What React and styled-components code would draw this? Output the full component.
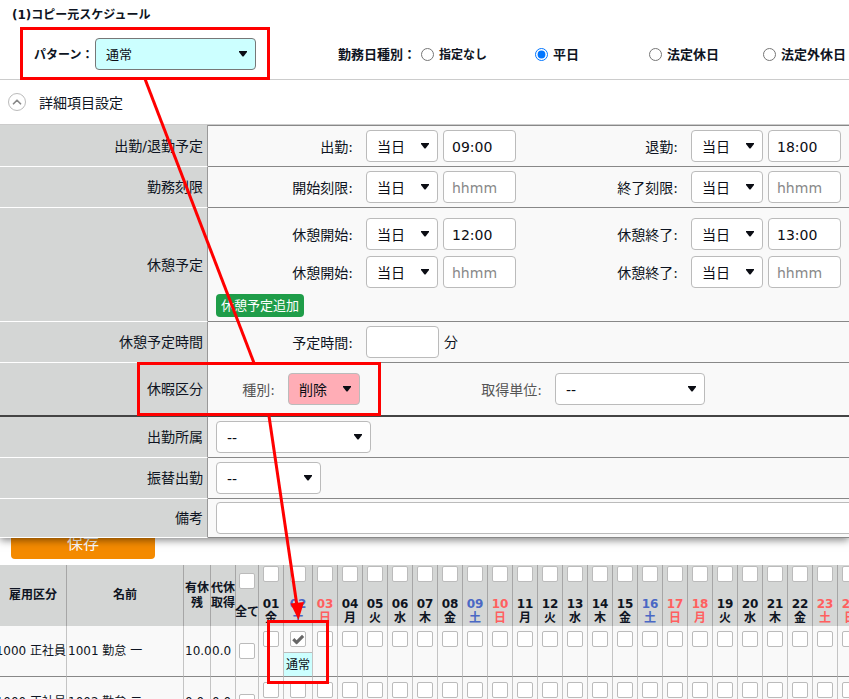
import React, { useState } from "react";
import styled, { createGlobalStyle } from "styled-components";
import { ChevronUp } from "lucide-react";

const GlobalStyle = createGlobalStyle`
  *, *::before, *::after { box-sizing: border-box; }
  body {
    margin: 0;
    background: #fff;
    color: #0e1422;
    font-family: "DejaVu Sans", "Noto Sans CJK JP", sans-serif;
    font-size: 14px;
    line-height: 20px;
  }
  button, input, select { font: inherit; color: inherit; margin: 0; }
`;

const Page = styled.div`
  position: relative;
  height: 100vh;
  overflow: hidden;
`;

const Panel = styled.section`
  position: relative;
  z-index: 1;
  background: #fff;
  box-shadow: 0 2px 8px rgba(0, 0, 0, 0.5);
`;

const Title = styled.h1`
  margin: 0;
  padding-left: 12px;
  font-size: 12px;
  line-height: 30px;
`;

const Conditions = styled.div`
  display: flex;
  align-items: flex-start;
  height: 50px;
  padding: 8px 0 0 34px;
  border-bottom: 1px solid #ccc;
  font-weight: bold;
  white-space: nowrap;
`;

const PatternLabel = styled.label`
  flex: 0 0 61px;
  font-size: 12px;
  line-height: 34px;
`;

const DayKinds = styled.div`
  display: flex;
  margin-left: 82px;
  font-size: 13px;
  line-height: 34px;
`;

const KindsTitle = styled.span`
  flex: 0 0 83px;
`;

const KindOption = styled.label`
  display: flex;
  align-items: center;
  gap: 5px;
  flex: 0 0 114px;
  font-size: ${(p) => (p.$kana ? 12 : 13)}px;
`;

const Radio = styled.input`
  width: 13px;
  height: 13px;
  accent-color: #0075ff;
  && { margin-bottom: 2px; }
`;

const DetailBar = styled.div`
  display: flex;
  align-items: center;
  gap: 13px;
  height: 45px;
  padding-left: 8px;
  border-bottom: 1px solid #ccc;
`;

const DetailTitle = styled.span`
  padding-top: 2px;
`;

const RoundButton = styled.button`
  display: flex;
  align-items: center;
  justify-content: center;
  width: 18px;
  height: 18px;
  padding: 0;
  border: 1px solid #bbb;
  border-radius: 50%;
  background: #fff;
  color: #888;
`;

const Row = styled.div`
  display: flex;
  height: ${(p) => p.$height || 41}px;
`;

const Head = styled.div`
  flex: 0 0 208px;
  display: flex;
  align-items: center;
  justify-content: flex-end;
  padding-right: 4px;
  background: #d4d6d5;
  border-right: 1px solid #999;
  border-bottom: ${(p) => (p.$strong ? "2px solid #444" : "1px solid #fff")};
`;

const Body = styled.div`
  flex: 1;
  min-width: 0;
  display: flex;
  flex-direction: column;
  justify-content: center;
  gap: 6px;
  background: #f9f9f9;
  border-top: ${(p) => (p.$first ? "1px solid #888" : "0")};
  border-bottom: ${(p) => (p.$strong ? "2px solid #444" : "1px solid #888")};
  padding: ${(p) => (p.$tall ? "10px 0 4px" : "0")};
`;

const Line = styled.div`
  display: flex;
  align-items: center;
  padding-left: ${(p) => (p.$inset ? 8 : 0)}px;
`;

const Group = styled.div`
  flex: 0 0 ${(p) => p.$width || 325}px;
  display: flex;
  align-items: center;
  gap: 5px;
  color: ${(p) => (p.$muted ? "#555" : "inherit")};
`;

const GroupLabel = styled.label`
  flex: 0 0 ${(p) => p.$width || 153}px;
  padding: 1px 8px 0 0;
  text-align: right;
  white-space: nowrap;
`;

const SelectBox = styled.span`
  position: relative;
  display: block;
  flex: 0 0 ${(p) => p.$width}px;
  height: 32px;
`;

const SelectField = styled.select`
  appearance: none;
  width: 100%;
  height: 32px;
  padding: 1px 20px 0 10px;
  border: 1px solid ${(p) => (p.$dark ? "#777" : "#bbb")};
  border-radius: 4px;
  background: ${(p) => p.$fill || "#fff"};
  color: #0b0d14;
  font-size: ${(p) => (p.$dark ? 13 : 14)}px;
  && { font-weight: normal; }
`;

const Caret = styled.svg`
  position: absolute;
  right: 9px;
  top: 13px;
  width: 8px;
  height: 6px;
  pointer-events: none;
`;

const TextField = styled.input`
  flex: 0 0 ${(p) => p.$width || 73}px;
  width: ${(p) => p.$width || 73}px;
  height: 32px;
  padding: 1px 8px 0;
  border: 1px solid #bbb;
  border-radius: 4px;
  background: #fff;
  color: #0b0d14;
  &::placeholder { color: #888; }
`;

const AddButton = styled.button`
  height: 23px;
  padding: 0 5px;
  border: 0;
  border-radius: 4px;
  background: #1f9d49;
  color: #fff;
  font-size: 13px;
  line-height: 23px;
  white-space: nowrap;
`;

const SaveButton = styled.button`
  display: block;
  width: 144px;
  height: 30px;
  margin: -9px 0 6px 11px;
  padding: 0;
  border: 0;
  border-radius: 4px;
  background: #f48a00;
  color: #fff;
  font-size: 16px;
  line-height: 30px;
`;

const Schedule = styled.table`
  table-layout: fixed;
  width: 863px;
  border-collapse: separate;
  border-spacing: 0;
  font-size: 12px;
  line-height: 15px;
`;

const HeadCell = styled.th`
  height: 61px;
  padding: 0;
  background: #d4d6d5;
  border-right: 1px solid #a6a6a6;
  vertical-align: ${(p) => (p.$top ? "top" : "middle")};
  color: ${(p) => p.$color || "inherit"};
  white-space: ${(p) => (p.$top ? "nowrap" : "normal")};
`;

const Cell = styled.td`
  height: 51px;
  padding: 0;
  background: #f9f9f9;
  border-right: 1px solid #c4c4c4;
  border-bottom: 1px solid #888;
  vertical-align: ${(p) => (p.$top ? "top" : "middle")};
`;

const CellText = styled.div`
  display: flex;
  justify-content: ${(p) => (p.$end ? "flex-end" : "flex-start")};
  padding-left: ${(p) => (p.$end ? 0 : 1)}px;
  white-space: pre;
`;

const Stack = styled.div`
  display: flex;
  flex-direction: column;
  align-items: center;
  justify-content: space-between;
  height: ${(p) => (p.$all ? 54 : 61)}px;
  margin-top: ${(p) => (p.$all ? 7 : 0)}px;
  padding: ${(p) => (p.$all ? "1px 0 7px" : "1px 0")};
  line-height: 14px;
`;

const CheckWrap = styled.span`
  position: relative;
  display: block;
  width: 16px;
  height: 16px;
  margin: 0 auto;
`;

const CheckInput = styled.input`
  appearance: none;
  display: block;
  width: 16px;
  height: 16px;
  border: 1px solid #bbb;
  border-radius: 2px;
  background: #fff;
`;

const CheckMark = styled.svg`
  position: absolute;
  left: 1px;
  top: 1px;
  width: 14px;
  height: 14px;
  pointer-events: none;
`;

const DayBox = styled.div`
  padding: 5px 0;
`;

const DayPattern = styled.div`
  height: 24px;
  border-top: 1px solid #bbb;
  background: #cff;
  text-align: center;
  line-height: 24px;
  white-space: nowrap;
`;

const Annotation = styled.svg`
  position: absolute;
  left: 0;
  top: 0;
  z-index: 2;
  width: 849px;
  height: 699px;
  pointer-events: none;
`;

function Select({ id, width, value, label, ...look }) {
  return (
    <SelectBox $width={width}>
      <SelectField id={id} aria-label={label} defaultValue={value} {...look}>
        <option value={value}>{value}</option>
      </SelectField>
      <Caret viewBox="0 0 8 6" aria-hidden="true">
        <path d="M0 0H8V1L4.500 5.500H3.500L0 1Z" fill="#0b0d14" />
      </Caret>
    </SelectBox>
  );
}

function TimeGroup({ id, label, time }) {
  return (
    <Group>
      <GroupLabel htmlFor={id}>{label}:</GroupLabel>
      <Select width={72} value="当日" label={`${label} 日`} />
      <TextField id={id} placeholder="hhmm" defaultValue={time} />
    </Group>
  );
}

function Check({ label, initial = false }) {
  const [on, setOn] = useState(initial);
  return (
    <CheckWrap>
      <CheckInput type="checkbox" aria-label={label} checked={on} onChange={() => setOn(!on)} />
      {on && (
        <CheckMark viewBox="0 0 14 14" aria-hidden="true">
          <path d="M1.2 8.2L3.4 6L5.600 8.200L11 2.700L13.200 4.900L6 12.300H5.200Z" fill="#666" />
        </CheckMark>
      )}
    </CheckWrap>
  );
}

const WEEK = ["金", "土", "日", "月", "火", "水", "木"];
const RED_DAYS = [3, 10, 17, 18, 23, 24];
const BLUE_DAYS = [2, 9, 16];
const DAYS = Array.from({ length: 24 }, (_, i) => {
  const n = i + 1;
  const color = RED_DAYS.includes(n) ? "#ff5f5f" : BLUE_DAYS.includes(n) ? "#4a68c4" : undefined;
  return { n, text: String(n).padStart(2, "0"), week: WEEK[i % 7], color };
});

const STAFF = [
  { type: "1000 正社員", name: "1001 勤怠 一", paid: "10.0", comp: "0.0", pattern: { 2: "通常" } },
  { type: "1000 正社員", name: "1002 勤怠 二", paid: "0.0", comp: "0.0", pattern: {} },
];

const KINDS = [
  { text: "指定なし", kana: true },
  { text: "平日" },
  { text: "法定休日" },
  { text: "法定外休日" },
];

export default function App() {
  return (
    <Page>
      <GlobalStyle />
      <Panel>
        <Title>(1)コピー元スケジュール</Title>
        <Conditions>
          <PatternLabel htmlFor="pattern">パターン：</PatternLabel>
          <Select id="pattern" width={161} value="通常" $fill="#cff" $dark />
          <DayKinds role="radiogroup" aria-labelledby="kinds">
            <KindsTitle id="kinds">勤務日種別：</KindsTitle>
            {KINDS.map((k) => (
              <KindOption key={k.text} $kana={k.kana}>
                <Radio type="radio" name="kind" defaultChecked={k.text === "平日"} />
                {k.text}
              </KindOption>
            ))}
          </DayKinds>
        </Conditions>
        <DetailBar>
          <RoundButton type="button" aria-label="詳細項目設定を閉じる">
            <ChevronUp size={14} strokeWidth={3} />
          </RoundButton>
          <DetailTitle>詳細項目設定</DetailTitle>
        </DetailBar>

        <Row $height={42}>
          <Head>出勤/退勤予定</Head>
          <Body $first>
            <Line>
              <TimeGroup id="in" label="出勤" time="09:00" />
              <TimeGroup id="out" label="退勤" time="18:00" />
            </Line>
          </Body>
        </Row>
        <Row>
          <Head>勤務刻限</Head>
          <Body>
            <Line>
              <TimeGroup id="from" label="開始刻限" />
              <TimeGroup id="to" label="終了刻限" />
            </Line>
          </Body>
        </Row>
        <Row $height={114}>
          <Head>休憩予定</Head>
          <Body $tall>
            <Line>
              <TimeGroup id="rest1" label="休憩開始" time="12:00" />
              <TimeGroup id="rest1end" label="休憩終了" time="13:00" />
            </Line>
            <Line>
              <TimeGroup id="rest2" label="休憩開始" />
              <TimeGroup id="rest2end" label="休憩終了" />
            </Line>
            <Line $inset>
              <AddButton type="button">休憩予定追加</AddButton>
            </Line>
          </Body>
        </Row>
        <Row>
          <Head>休憩予定時間</Head>
          <Body>
            <Group>
              <GroupLabel htmlFor="minutes">予定時間:</GroupLabel>
              <TextField id="minutes" />
              分
            </Group>
          </Body>
        </Row>
        <Row $height={54}>
          <Head $strong>休暇区分</Head>
          <Body $strong>
            <Line>
              <Group $muted $width={192}>
                <GroupLabel htmlFor="leave" $width={75}>種別:</GroupLabel>
                <Select id="leave" width={72} value="削除" $fill="#ffadb6" />
              </Group>
              <Group $muted $width={305}>
                <GroupLabel htmlFor="unit" $width={150}>取得単位:</GroupLabel>
                <Select id="unit" width={150} value="--" />
              </Group>
            </Line>
          </Body>
        </Row>
        <Row>
          <Head>出勤所属</Head>
          <Body>
            <Line $inset>
              <Select width={155} value="--" label="出勤所属" />
            </Line>
          </Body>
        </Row>
        <Row>
          <Head>振替出勤</Head>
          <Body>
            <Line $inset>
              <Select width={105} value="--" label="振替出勤" />
            </Line>
          </Body>
        </Row>
        <Row $height={39}>
          <Head>備考</Head>
          <Body>
            <Line $inset>
              <TextField $width={700} aria-label="備考" />
            </Line>
          </Body>
        </Row>
      </Panel>

      <SaveButton type="button">保存</SaveButton>

      <Schedule>
        <colgroup>
          <col width="67" />
          <col width="117" />
          <col width="27" />
          <col width="25" />
          <col width="23" />
          {DAYS.map((d) => (
            <col key={d.n} width={d.n === 2 ? 29 : 25} />
          ))}
        </colgroup>
        <thead>
          <tr>
            <HeadCell>雇用区分</HeadCell>
            <HeadCell>名前</HeadCell>
            <HeadCell>有休残</HeadCell>
            <HeadCell>代休取得</HeadCell>
            <HeadCell $top>
              <Stack $all>
                <Check label="すべての従業員" />
                <span>全て</span>
              </Stack>
            </HeadCell>
            {DAYS.map((d) => (
              <HeadCell key={d.n} $top $color={d.color}>
                <Stack>
                  <Check label={`${d.text}日`} />
                  <span>
                    {d.text}
                    <br />
                    {d.week}
                  </span>
                </Stack>
              </HeadCell>
            ))}
          </tr>
        </thead>
        <tbody>
          {STAFF.map((s) => (
            <tr key={s.name}>
              <Cell><CellText $end>{s.type}</CellText></Cell>
              <Cell><CellText>{s.name}</CellText></Cell>
              <Cell><CellText>{s.paid}</CellText></Cell>
              <Cell><CellText>{s.comp}</CellText></Cell>
              <Cell><Check label={s.name} /></Cell>
              {DAYS.map((d) => (
                <Cell key={d.n} $top>
                  <DayBox>
                    <Check label={`${s.name} ${d.text}日`} initial={Boolean(s.pattern[d.n])} />
                  </DayBox>
                  {s.pattern[d.n] && <DayPattern>{s.pattern[d.n]}</DayPattern>}
                </Cell>
              ))}
            </tr>
          ))}
        </tbody>
      </Schedule>

      <Annotation viewBox="0 0 849 699" fill="none" stroke="#f00" strokeWidth="3" aria-hidden="true">
        <rect x="21.5" y="28.5" width="247" height="50" />
        <rect x="138.5" y="363.5" width="241" height="51" />
        <rect x="268.5" y="621.5" width="59" height="61" />
        <path d="M145 79L254 363" />
        <path d="M269 416L297 606" />
        <path d="M290.500 603.500L304 602L298.500 620Z" fill="#f00" stroke="none" />
      </Annotation>
    </Page>
  );
}
